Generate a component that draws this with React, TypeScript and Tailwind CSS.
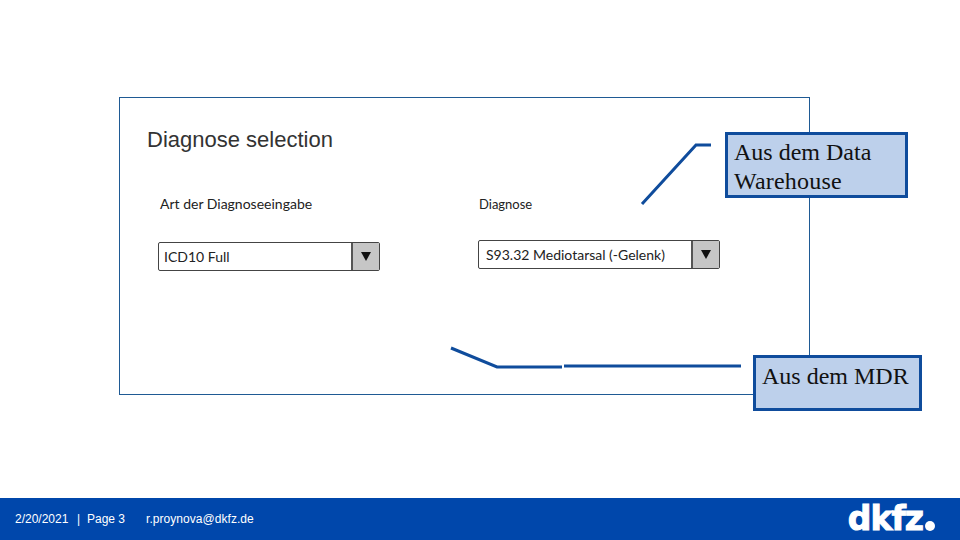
export default function App() {
  const serif = "font-['Liberation_Serif',serif] text-[24px] leading-[29px] text-[#111]";
  const hand = "font-['Lato',sans-serif] text-[#222]";
  const selectBox = "flex h-[29px] border border-[#444] rounded-[2px] bg-white";
  const Arrow = () => (
    <div className="flex w-[28px] items-center justify-center border-l-2 border-[#555] bg-[#c6c6c6]">
      <svg width="10" height="9" viewBox="0 0 10 9"><path d="M0 0h10L5 9z" fill="#111" /></svg>
    </div>
  );
  return (
    <div className="relative flex h-[540px] w-[960px] flex-col overflow-hidden bg-white">
      <main className="h-[498px] pl-[119px] pt-[97px]">
        <section className="h-[298px] w-[691px] border border-[#1f5a94] pl-[27px] pt-[27px]">
          <h1 className="font-['Liberation_Sans',sans-serif] text-[22px] leading-[30px] text-[#333]">Diagnose selection</h1>
          <div className="mt-[40px] flex">
            <div className="ml-[11px] w-[222px]">
              <div className={`${hand} ml-[2px] text-[14px] leading-[18px]`}>Art der Diagnoseeingabe</div>
              <div className={`${selectBox} mt-[29px]`}>
                <div className={`${hand} flex-1 pl-[5px] text-[14px] leading-[28px]`}>ICD10 Full</div>
                <Arrow />
              </div>
            </div>
            <div className="ml-[98px] w-[242px]">
              <div className={`${hand} ml-[1px] text-[13px] leading-[18px]`}>Diagnose</div>
              <div className={`${selectBox} mt-[27px]`}>
                <div className={`${hand} flex-1 pl-[7px] text-[14px] leading-[28px]`}>S93.32 Mediotarsal (-Gelenk)</div>
                <Arrow />
              </div>
            </div>
          </div>
        </section>
      </main>
      <footer className="flex h-[42px] items-center justify-between bg-[#0047ab] pl-[15px] pr-[25px] font-['Liberation_Sans',sans-serif] text-[12px] text-white">
        <div className="flex">
          <span className="w-[62px]">2/20/2021</span>
          <span className="w-[10px]">|</span>
          <span className="w-[59px]">Page 3</span>
          <span className="tracking-[0.05px]">r.proynova@dkfz.de</span>
        </div>
        <div className="flex items-center">
          <span className="font-['DejaVu_Sans',sans-serif] text-[33px] font-bold leading-[30px] tracking-[-1px] [-webkit-text-stroke:1px_white]">dkfz</span>
          <span className="ml-[2px] mt-[13px] h-[10px] w-[10px] rounded-full bg-white" />
        </div>
      </footer>

      <svg className="absolute left-0 top-0" width="960" height="540" fill="none" stroke="#0f4c9c" strokeWidth="3">
        <path d="M642 204 L696 145 H711" />
        <path d="M451 348 L497 367 H562" />
        <path d="M564 366 H741" />
      </svg>
      <div className={`${serif} absolute left-[725px] top-[132px] h-[66px] w-[183px] border-[3px] border-[#0f4c9c] bg-[#bdd0eb] pl-[6px] pt-[3px]`}>
        Aus dem Data<br /><span className="tracking-[0.2px]">Warehouse</span>
      </div>
      <div className={`${serif} absolute left-[753px] top-[355px] h-[56px] w-[169px] border-[3px] border-[#0f4c9c] bg-[#bdd0eb] pl-[6px] pt-[4px]`}>
        Aus dem MDR
      </div>
    </div>
  );
}
